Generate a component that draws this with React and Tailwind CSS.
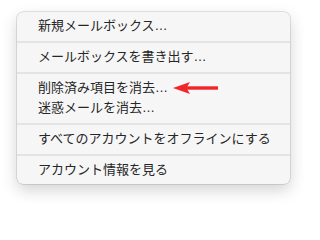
const font = { fontFamily: '"Liberation Sans", "Noto Sans CJK JP", sans-serif' }

const groups = [
  ['新規メールボックス…'],
  ['メールボックスを書き出す…'],
  ['削除済み項目を消去…', '迷惑メールを消去…'],
  ['すべてのアカウントをオフラインにする'],
  ['アカウント情報を見る'],
]

function Arrow() {
  return (
    <svg width="45" height="12" viewBox="0 0 45 12" className="absolute left-[156px] top-[4px]">
      <polygon points="0,6 17,0 13.5,6 17,12" fill="#f0262b" />
      <rect x="13" y="4.3" width="32" height="3.4" fill="#f0262b" />
    </svg>
  )
}

export default function App() {
  return (
    <div className="w-[307px] h-[204px] bg-white pt-3 pl-[17px]" style={font}>
      <div className="w-[273px] bg-[#f6f6f6] rounded-[6px] py-1 shadow-[0_6px_16px_rgba(0,0,0,0.18),0_0_0_0.5px_rgba(0,0,0,0.2)]">
        {groups.map((items, gi) => (
          <div key={gi}>
            {gi > 0 && <div className="mt-[5px] mb-[4px] h-[2px] bg-[#e4e4e4]" />}
            {items.map((t, i) => (
              <div key={t} className="relative h-5 pl-[21px] flex items-center text-[13px] leading-5 text-[#262626]">
                {t}
                {gi === 2 && i === 0 && <Arrow />}
              </div>
            ))}
          </div>
        ))}
      </div>
    </div>
  )
}
